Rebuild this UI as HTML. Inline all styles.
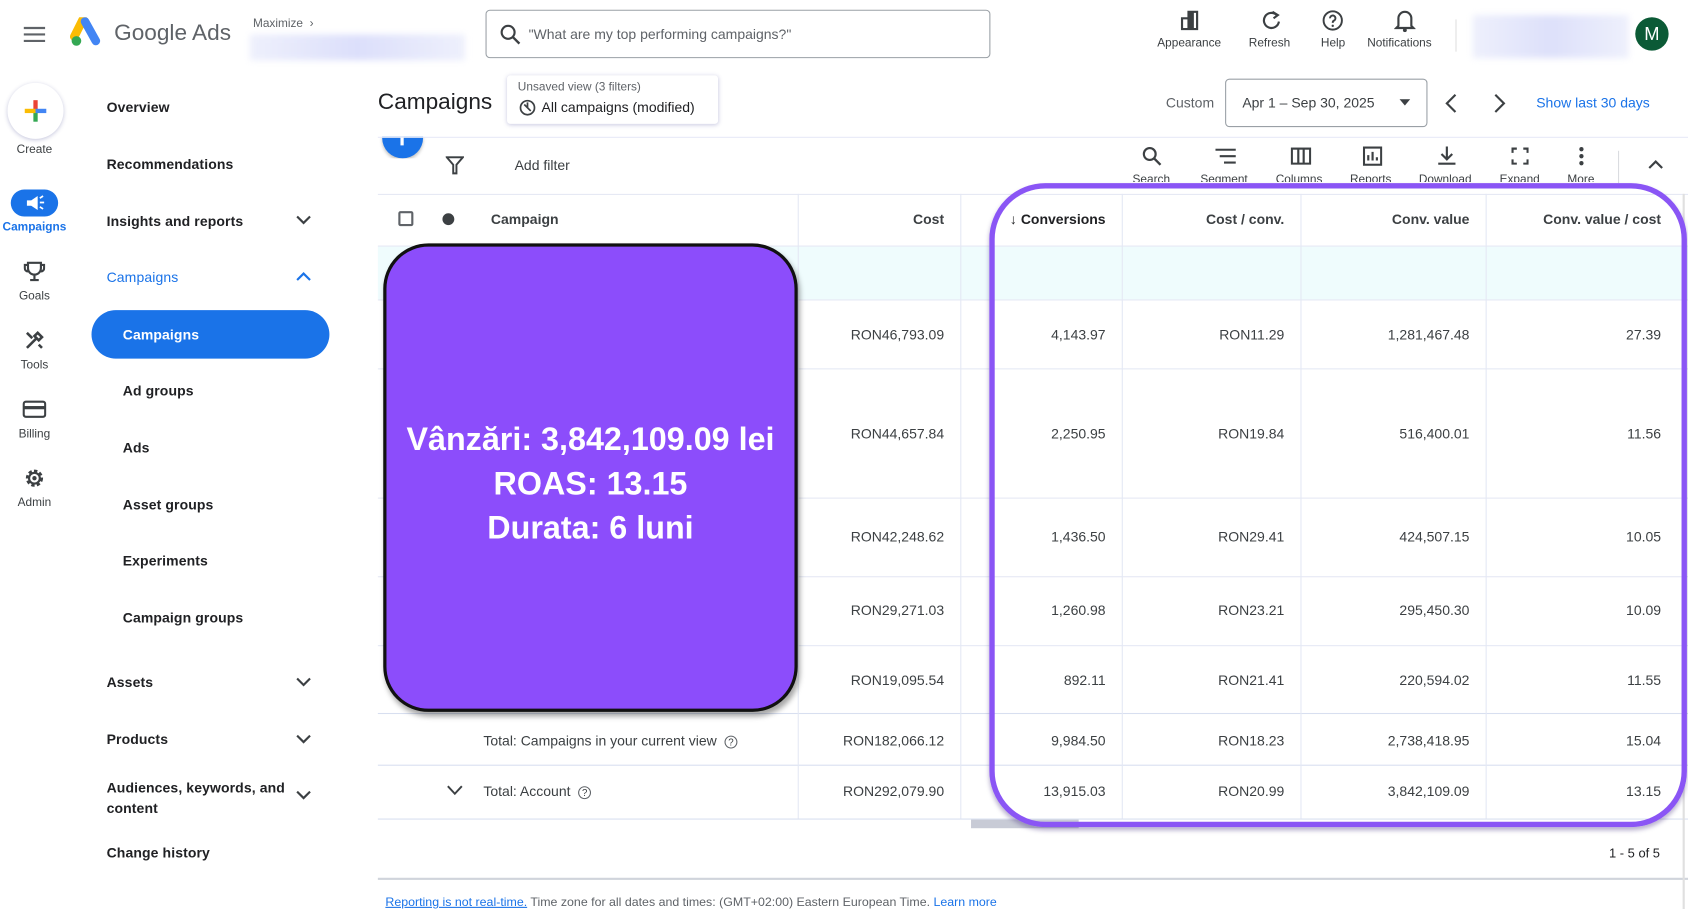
<!DOCTYPE html>
<html><head><meta charset="utf-8"><style>
*{margin:0;padding:0;box-sizing:border-box}
html,body{width:1688px;height:909px;overflow:hidden;background:#fff}
#w{position:absolute;left:0;top:0;width:1568px;height:844px;transform:scale(1.07653,1.07701);transform-origin:0 0;font-family:"Liberation Sans",Arial,sans-serif;color:#202124}
.a{position:absolute;white-space:nowrap}
.nav{font-size:13px;font-weight:bold;color:#202124;letter-spacing:.1px}
.rl{font-size:11px;color:#3c4043;text-align:center;width:64px;left:0}
.tl{font-size:11px;color:#5f6368}
.hd{font-size:13px;font-weight:bold;color:#3c4043}
.n{font-size:13px;color:#3c4043;text-align:right}
.vl{position:absolute;width:1px;background:#e4e8f4}
.hl{position:absolute;height:1px;background:#e4e8f4;left:351px;width:1217px}
</style></head><body><div id="w">
<!-- header -->
<svg class="a" style="left:22px;top:24px" width="20" height="16"><path d="M0 2h20M0 8h20M0 14h20" stroke="#5f6368" stroke-width="2"/></svg>
<svg class="a" style="left:65px;top:16px" width="32" height="28" viewBox="0 0 32 28"><path d="M12 2 L4 18" stroke="#fbbc04" stroke-width="8" stroke-linecap="round"/><path d="M14 4 L24 22" stroke="#4285f4" stroke-width="8" stroke-linecap="round"/><circle cx="6" cy="22" r="4.5" fill="#34a853"/></svg>
<div class="a" style="left:106px;top:19px;font-size:21px;color:#5f6368">Google Ads</div>
<div class="a" style="left:235px;top:16px;font-size:11px;color:#5f6368">Maximize &nbsp;›</div>
<div class="a" style="left:232px;top:32px;width:200px;height:24px;background:linear-gradient(90deg,#eef0fc,#dcdffb,#eef0fc);filter:blur(3px)"></div>
<div class="a" style="left:451px;top:9px;width:469px;height:45px;border:1px solid #9aa0a6;border-radius:4px"></div>
<svg class="a" style="left:464px;top:22px" width="20" height="20"><circle cx="8" cy="8" r="6" fill="none" stroke="#3c4043" stroke-width="2"/><path d="M12.5 12.5l6 6" stroke="#3c4043" stroke-width="2.2"/></svg>
<div class="a" style="left:491px;top:24px;font-size:13px;color:#5f6368">"What are my top performing campaigns?"</div>
<svg class="a" style="left:1096px;top:9px" width="20" height="20"><path d="M2 8h6v10H2zM8 2h8v16H8z" fill="none" stroke="#3c4043" stroke-width="2"/><rect x="8" y="2" width="5" height="16" fill="#3c4043"/></svg>
<svg class="a" style="left:1171px;top:9px" width="20" height="20"><path d="M15 5A7 7 0 1 0 17 11" fill="none" stroke="#3c4043" stroke-width="2"/><path d="M11 2l5 3-4 3" fill="none" stroke="#3c4043" stroke-width="2"/></svg>
<svg class="a" style="left:1228px;top:9px" width="20" height="20"><circle cx="10" cy="10" r="8.5" fill="none" stroke="#3c4043" stroke-width="1.8"/><path d="M7.5 8a2.5 2.5 0 1 1 3.5 2.2c-.8.4-1 1-1 2" fill="none" stroke="#3c4043" stroke-width="1.8"/><circle cx="10" cy="15" r="1.1" fill="#3c4043"/></svg>
<svg class="a" style="left:1295px;top:8px" width="20" height="22"><path d="M4 16V9a6 6 0 0 1 12 0v7l2 2H2z" fill="none" stroke="#3c4043" stroke-width="2"/><circle cx="10" cy="20" r="1.8" fill="#3c4043"/></svg>
<div class="a tl" style="left:1075px;top:34px;color:#3c4043">Appearance</div>
<div class="a tl" style="left:1160px;top:34px;color:#3c4043">Refresh</div>
<div class="a tl" style="left:1227px;top:34px;color:#3c4043">Help</div>
<div class="a tl" style="left:1270px;top:34px;color:#3c4043">Notifications</div>
<div class="a" style="left:1352px;top:18px;width:1px;height:30px;background:#e0e0e0"></div>
<div class="a" style="left:1368px;top:14px;width:145px;height:40px;background:linear-gradient(90deg,#eef0fc,#dde0fa,#eef0fc);filter:blur(3px)"></div>
<div class="a" style="left:1519px;top:16px;width:31px;height:31px;border-radius:50%;background:#0b5a36;color:#fff;font-size:17px;text-align:center;line-height:31px">M</div>
<!-- rail -->
<div class="a" style="left:7px;top:77px;width:52px;height:52px;border-radius:50%;background:#fff;box-shadow:0 1px 4px rgba(60,64,140,.3)"></div>
<svg class="a" style="left:21px;top:91px" width="24" height="24"><rect x="10" y="2" width="4" height="10" fill="#ea4335"/><rect x="10" y="12" width="4" height="10" fill="#34a853"/><rect x="2" y="10" width="10" height="4" fill="#fbbc04"/><rect x="12" y="10" width="10" height="4" fill="#4285f4"/></svg>
<div class="a rl" style="top:133px">Create</div>
<div class="a" style="left:10px;top:176px;width:44px;height:25px;border-radius:13px;background:#1a73e8"></div>
<svg class="a" style="left:22px;top:180px" width="20" height="17"><path d="M3 6h4l6-4v13l-6-4H3z" fill="#fff"/><path d="M15 4l3-2M15 8h4M15 12l3 2" stroke="#fff" stroke-width="1.6"/></svg>
<div class="a rl" style="top:205px;color:#1a73e8;font-weight:bold">Campaigns</div>
<svg class="a" style="left:22px;top:242px" width="20" height="20"><path d="M4 2h12v5a6 6 0 0 1-12 0zM4 4H1v3a3 3 0 0 0 3 3M16 4h3v3a3 3 0 0 1-3 3M10 13v4M6 18h8" fill="none" stroke="#3c4043" stroke-width="2"/></svg>
<div class="a rl" style="top:269px">Goals</div>
<svg class="a" style="left:22px;top:306px" width="20" height="20"><path d="M3 17L12 8M13 3l4 4-3 3-4-4zM3 3l5 5M14 14l3 3" stroke="#3c4043" stroke-width="2.4" fill="none"/></svg>
<div class="a rl" style="top:333px">Tools</div>
<svg class="a" style="left:21px;top:371px" width="22" height="18"><rect x="1" y="2" width="20" height="14" rx="2" fill="none" stroke="#3c4043" stroke-width="2"/><rect x="1" y="6" width="20" height="3" fill="#3c4043"/></svg>
<div class="a rl" style="top:397px">Billing</div>
<svg class="a" style="left:22px;top:434px" width="20" height="20"><circle cx="10" cy="10" r="6.5" fill="none" stroke="#3c4043" stroke-width="3" stroke-dasharray="3 2"/><circle cx="10" cy="10" r="5" fill="none" stroke="#3c4043" stroke-width="2"/><circle cx="10" cy="10" r="2" fill="#3c4043"/></svg>
<div class="a rl" style="top:461px">Admin</div>
<!-- nav -->
<div class="a nav" style="left:99px;top:92px">Overview</div>
<div class="a nav" style="left:99px;top:145px">Recommendations</div>
<div class="a nav" style="left:99px;top:198px">Insights and reports</div>
<div class="a nav" style="left:99px;top:250px;color:#1a73e8;font-weight:normal">Campaigns</div>
<div class="a" style="left:85px;top:288px;width:221px;height:45px;border-radius:23px;background:#1a73e8"></div>
<div class="a nav" style="left:114px;top:303px;color:#fff">Campaigns</div>
<div class="a nav" style="left:114px;top:355px">Ad groups</div>
<div class="a nav" style="left:114px;top:408px">Ads</div>
<div class="a nav" style="left:114px;top:461px">Asset groups</div>
<div class="a nav" style="left:114px;top:513px">Experiments</div>
<div class="a nav" style="left:114px;top:566px">Campaign groups</div>
<div class="a nav" style="left:99px;top:626px">Assets</div>
<div class="a nav" style="left:99px;top:679px">Products</div>
<div class="a nav" style="left:99px;top:722px;line-height:19px">Audiences, keywords, and<br>content</div>
<div class="a nav" style="left:99px;top:784px">Change history</div>
<svg class="a" style="left:275px;top:199px" width="14" height="10"><path d="M1 2l6 6 6-6" fill="none" stroke="#3c4043" stroke-width="2"/></svg>
<svg class="a" style="left:275px;top:252px" width="14" height="10"><path d="M1 8l6-6 6 6" fill="none" stroke="#1a73e8" stroke-width="2"/></svg>
<svg class="a" style="left:275px;top:628px" width="14" height="10"><path d="M1 2l6 6 6-6" fill="none" stroke="#3c4043" stroke-width="2"/></svg>
<svg class="a" style="left:275px;top:681px" width="14" height="10"><path d="M1 2l6 6 6-6" fill="none" stroke="#3c4043" stroke-width="2"/></svg>
<svg class="a" style="left:275px;top:733px" width="14" height="10"><path d="M1 2l6 6 6-6" fill="none" stroke="#3c4043" stroke-width="2"/></svg>
<!-- main top -->
<div class="a" style="left:351px;top:83px;font-size:21px;color:#202124">Campaigns</div>
<div class="a" style="left:471px;top:70px;width:196px;height:45px;background:#fff;border-radius:3px;box-shadow:0 1px 4px rgba(80,80,160,.3)"></div>
<div class="a tl" style="left:481px;top:75px">Unsaved view (3 filters)</div>
<svg class="a" style="left:482px;top:92px" width="16" height="16"><circle cx="8" cy="8" r="6.5" fill="none" stroke="#3c4043" stroke-width="1.6"/><path d="M5 5l6 6M8 3v5" stroke="#3c4043" stroke-width="1.6"/></svg>
<div class="a" style="left:503px;top:92px;font-size:13px;color:#202124">All campaigns (modified)</div>
<div class="a" style="left:1083px;top:88px;font-size:13px;color:#5f6368">Custom</div>
<div class="a" style="left:1138px;top:73px;width:188px;height:45px;border:1px solid #9aa0a6;border-radius:4px"></div>
<div class="a" style="left:1154px;top:88px;font-size:13px;color:#3c4043">Apr 1 – Sep 30, 2025</div>
<svg class="a" style="left:1300px;top:92px" width="10" height="6"><path d="M0 0h10L5 6z" fill="#3c4043"/></svg>
<svg class="a" style="left:1342px;top:87px" width="12" height="18"><path d="M10 1L2 9l8 8" fill="none" stroke="#3c4043" stroke-width="2"/></svg>
<svg class="a" style="left:1387px;top:87px" width="12" height="18"><path d="M2 1l8 8-8 8" fill="none" stroke="#3c4043" stroke-width="2"/></svg>
<div class="a" style="left:1427px;top:88px;font-size:13px;color:#1a73e8">Show last 30 days</div>
<div class="a" style="left:351px;top:127px;width:1217px;height:20px;overflow:hidden">
<div class="a" style="left:4px;top:-18px;width:38px;height:38px;border-radius:50%;background:#1a73e8;box-shadow:0 2px 3px rgba(0,0,0,.25)"></div>
<div class="a" style="left:21px;top:0;width:3px;height:8px;background:#fff"></div>
</div>
<div class="hl" style="top:127px;background:#e6e9f7"></div>
<svg class="a" style="left:414px;top:145px" width="17" height="17"><path d="M1 1h15l-6 7v8h-3v-8z" fill="none" stroke="#3c4043" stroke-width="1.8"/></svg>
<div class="a" style="left:478px;top:146px;font-size:13px;color:#3c4043">Add filter</div>
<!-- toolbar -->
<svg class="a" style="left:1061px;top:136px" width="18" height="18"><circle cx="7" cy="7" r="5.5" fill="none" stroke="#3c4043" stroke-width="2"/><path d="M11 11l6 6" stroke="#3c4043" stroke-width="2.2"/></svg>
<svg class="a" style="left:1129px;top:138px" width="19" height="14"><path d="M0 1h19M4 7h15M8 13h11" stroke="#3c4043" stroke-width="2"/></svg>
<svg class="a" style="left:1199px;top:137px" width="19" height="16"><rect x="1" y="1" width="17" height="14" fill="none" stroke="#3c4043" stroke-width="2"/><path d="M7 1v14M12 1v14" stroke="#3c4043" stroke-width="2"/></svg>
<svg class="a" style="left:1266px;top:136px" width="18" height="18"><rect x="1" y="1" width="16" height="16" fill="none" stroke="#3c4043" stroke-width="2"/><path d="M5 13V8M9 13V5M13 13v-3" stroke="#3c4043" stroke-width="2"/></svg>
<svg class="a" style="left:1335px;top:135px" width="18" height="19"><path d="M9 1v11M4 8l5 5 5-5M1 17h16" fill="none" stroke="#3c4043" stroke-width="2"/></svg>
<svg class="a" style="left:1404px;top:137px" width="16" height="16"><path d="M1 5V1h4M11 1h4v4M15 11v4h-4M5 15H1v-4" fill="none" stroke="#3c4043" stroke-width="2"/></svg>
<svg class="a" style="left:1465px;top:136px" width="8" height="18"><circle cx="4" cy="2.5" r="2" fill="#3c4043"/><circle cx="4" cy="9" r="2" fill="#3c4043"/><circle cx="4" cy="15.5" r="2" fill="#3c4043"/></svg>
<div class="a" style="left:0;top:160px;width:1568px;height:9px;overflow:hidden">
<div class="a tl" style="left:1052px;top:1px;color:#3c4043">Search</div>
<div class="a tl" style="left:1115px;top:1px;color:#3c4043">Segment</div>
<div class="a tl" style="left:1185px;top:1px;color:#3c4043">Columns</div>
<div class="a tl" style="left:1254px;top:1px;color:#3c4043">Reports</div>
<div class="a tl" style="left:1318px;top:1px;color:#3c4043">Download</div>
<div class="a tl" style="left:1393px;top:1px;color:#3c4043">Expand</div>
<div class="a tl" style="left:1456px;top:1px;color:#3c4043">More</div>
</div>
<div class="a" style="left:1503px;top:140px;width:1px;height:30px;background:#dadce0"></div>
<svg class="a" style="left:1531px;top:148px" width="14" height="9"><path d="M1 8l6-6 6 6" fill="none" stroke="#3c4043" stroke-width="2"/></svg>
<!-- table -->
<div class="hl" style="top:180px"></div>
<div class="a" style="left:351px;top:229px;width:1217px;height:49px;background:#effcfd"></div>
<div class="hl" style="top:228px"></div>
<div class="hl" style="top:278px"></div>
<div class="hl" style="top:342px"></div>
<div class="hl" style="top:462px"></div>
<div class="hl" style="top:535px"></div>
<div class="hl" style="top:599px"></div>
<div class="hl" style="top:662px;background:#d8dff0"></div>
<div class="hl" style="top:710px;background:#d8dff0"></div>
<div class="hl" style="top:760px;background:#d8dff0"></div>
<div class="hl" style="top:815px;height:2px;background:#d0d4dc"></div>
<div class="vl" style="left:741px;top:180px;height:580px"></div>
<div class="vl" style="left:892px;top:180px;height:580px"></div>
<div class="vl" style="left:1042px;top:180px;height:580px"></div>
<div class="vl" style="left:1208px;top:180px;height:580px"></div>
<div class="vl" style="left:1380px;top:180px;height:580px"></div>
<div class="a" style="left:370px;top:196px;width:14px;height:14px;border:2px solid #5f6368;border-radius:2px"></div>
<div class="a" style="left:411px;top:198px;width:11px;height:11px;border-radius:50%;background:#3c4043"></div>
<div class="a hd" style="left:456px;top:196px">Campaign</div>
<div class="a hd" style="right:691px;top:196px">Cost</div>
<div class="a hd" style="right:541px;top:196px;color:#202124">↓ Conversions</div>
<div class="a hd" style="right:375px;top:196px">Cost / conv.</div>
<div class="a hd" style="right:203px;top:196px">Conv. value</div>
<div class="a hd" style="right:25px;top:196px">Conv. value / cost</div>

<div class="a n" style="right:691px;top:303px">RON46,793.09</div><div class="a n" style="right:541px;top:303px">4,143.97</div><div class="a n" style="right:375px;top:303px">RON11.29</div><div class="a n" style="right:203px;top:303px">1,281,467.48</div><div class="a n" style="right:25px;top:303px">27.39</div>
<div class="a n" style="right:691px;top:395px">RON44,657.84</div><div class="a n" style="right:541px;top:395px">2,250.95</div><div class="a n" style="right:375px;top:395px">RON19.84</div><div class="a n" style="right:203px;top:395px">516,400.01</div><div class="a n" style="right:25px;top:395px">11.56</div>
<div class="a n" style="right:691px;top:491px">RON42,248.62</div><div class="a n" style="right:541px;top:491px">1,436.50</div><div class="a n" style="right:375px;top:491px">RON29.41</div><div class="a n" style="right:203px;top:491px">424,507.15</div><div class="a n" style="right:25px;top:491px">10.05</div>
<div class="a n" style="right:691px;top:559px">RON29,271.03</div><div class="a n" style="right:541px;top:559px">1,260.98</div><div class="a n" style="right:375px;top:559px">RON23.21</div><div class="a n" style="right:203px;top:559px">295,450.30</div><div class="a n" style="right:25px;top:559px">10.09</div>
<div class="a n" style="right:691px;top:624px">RON19,095.54</div><div class="a n" style="right:541px;top:624px">892.11</div><div class="a n" style="right:375px;top:624px">RON21.41</div><div class="a n" style="right:203px;top:624px">220,594.02</div><div class="a n" style="right:25px;top:624px">11.55</div>
<div class="a" style="left:449px;top:680px;font-size:13px;color:#3c4043">Total: Campaigns in your current view &nbsp;<span style="display:inline-block;width:12px;height:12px;border:1px solid #5f6368;border-radius:50%;font-size:9px;text-align:center;line-height:11px">?</span></div>
<div class="a n" style="right:691px;top:680px">RON182,066.12</div><div class="a n" style="right:541px;top:680px">9,984.50</div><div class="a n" style="right:375px;top:680px">RON18.23</div><div class="a n" style="right:203px;top:680px">2,738,418.95</div><div class="a n" style="right:25px;top:680px">15.04</div>
<svg class="a" style="left:415px;top:729px" width="15" height="10"><path d="M1 1l6.5 7L14 1" fill="none" stroke="#3c4043" stroke-width="1.8"/></svg>
<div class="a" style="left:449px;top:727px;font-size:13px;color:#3c4043">Total: Account &nbsp;<span style="display:inline-block;width:12px;height:12px;border:1px solid #5f6368;border-radius:50%;font-size:9px;text-align:center;line-height:11px">?</span></div>
<div class="a n" style="right:691px;top:727px">RON292,079.90</div><div class="a n" style="right:541px;top:727px">13,915.03</div><div class="a n" style="right:375px;top:727px">RON20.99</div><div class="a n" style="right:203px;top:727px">3,842,109.09</div><div class="a n" style="right:25px;top:727px">13.15</div>
<div class="a" style="left:902px;top:761px;width:100px;height:8px;background:#c8cbd6"></div>
<div class="a" style="right:26px;top:785px;font-size:12px;color:#202124">1 - 5 of 5</div>
<div class="a" style="left:358px;top:832px;font-size:11.5px;color:#5f6368"><span style="color:#1a73e8;text-decoration:underline">Reporting is not real-time.</span> Time zone for all dates and times: (GMT+02:00) Eastern European Time. <span style="color:#1a73e8">Learn more</span></div>
<div class="a" style="left:1563px;top:180px;width:2px;height:664px;background:#e0e0e0"></div>
<!-- overlays -->
<div class="a" style="left:356px;top:226px;width:385px;height:435px;border-radius:42px;background:#8c4dfb;border:3px solid #111;box-shadow:2px 4px 5px rgba(0,0,0,.35)"></div>
<div class="a" style="left:356px;top:388px;width:385px;text-align:center;color:#fff;font-weight:bold;font-size:30px;line-height:41px">Vânzări: 3,842,109.09 lei<br>ROAS: 13.15<br>Durata: 6 luni</div>
<div class="a" style="left:919px;top:170px;width:648px;height:598px;border:5px solid #8a55f5;border-radius:52px;box-shadow:0 3px 4px rgba(60,40,120,.35)"></div>
</div></body></html>
